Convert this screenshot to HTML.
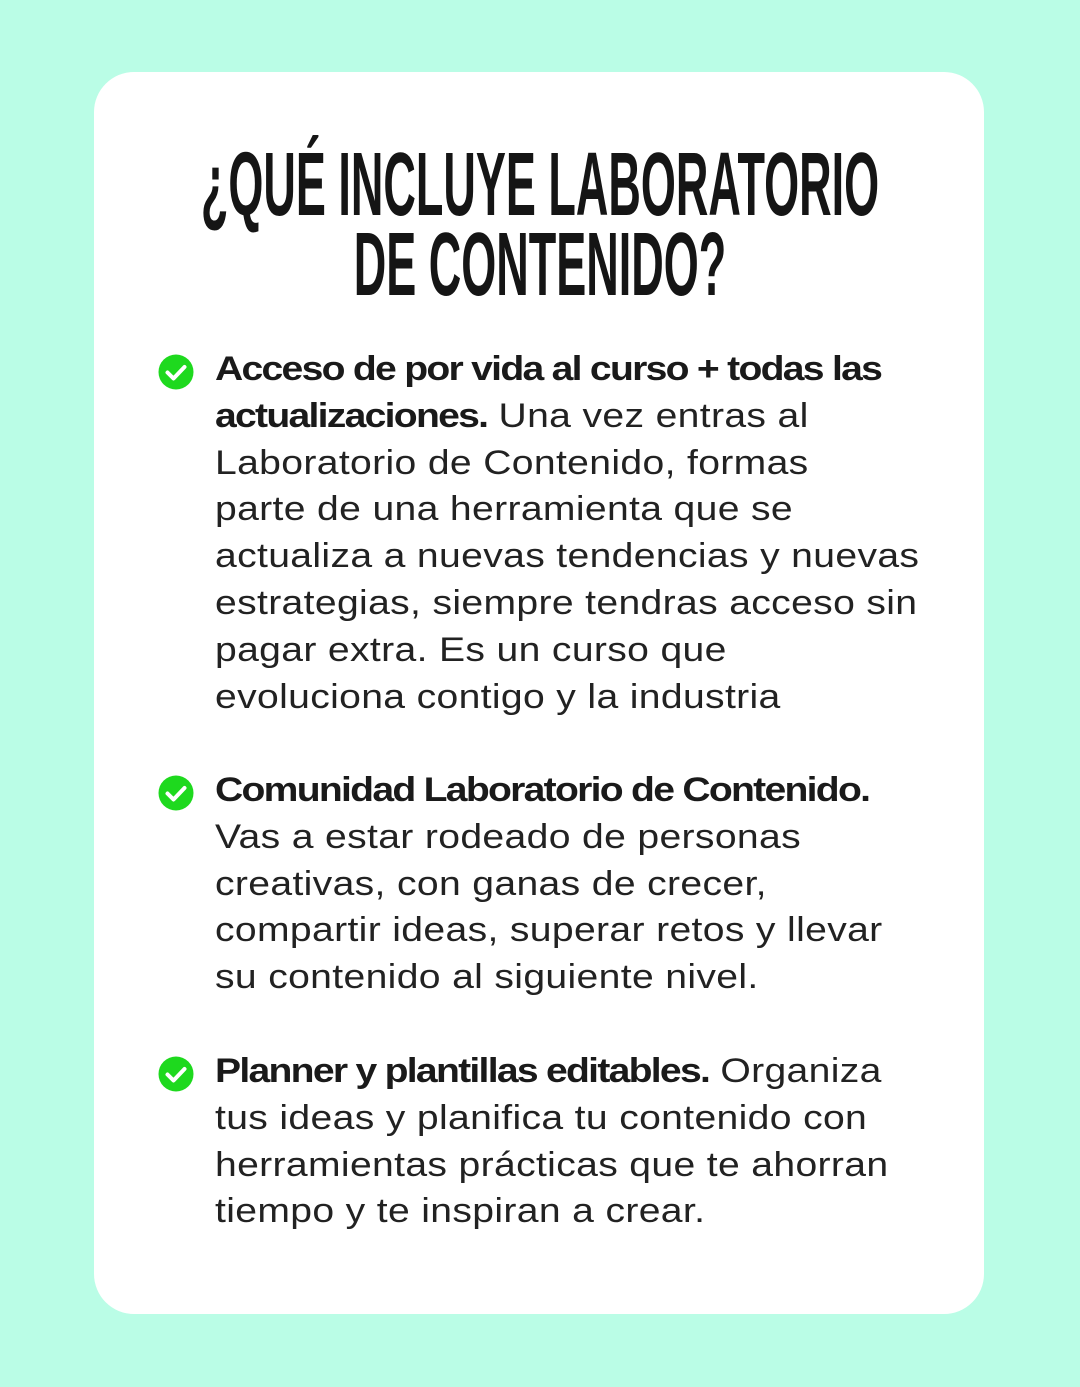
<!DOCTYPE html>
<html><head><meta charset="utf-8"><style>
html,body{margin:0;padding:0;}
body{width:1080px;height:1387px;background:#bafde6;position:relative;overflow:hidden;font-family:"Liberation Sans",sans-serif;color:#1a1a1a;}
.card{position:absolute;left:94px;top:72px;width:890px;height:1242px;background:#fff;border-radius:40px;}
.t{position:absolute;left:540px;font-weight:bold;font-size:90px;line-height:90px;color:#151515;white-space:nowrap;transform:translateX(-50%) scaleX(0.5);}
.item{position:absolute;left:215px;font-size:34px;line-height:46.8px;white-space:nowrap;color:#222;transform:scaleX(1.15);transform-origin:left top;letter-spacing:0.3px;}
.item b{font-weight:bold;letter-spacing:-1.5px;color:#1a1a1a;}
.ck{position:absolute;left:158px;width:36px;height:36px;}
</style></head><body>
<div class="card"></div>
<div class="t" style="top:140px">¿QUÉ INCLUYE LABORATORIO</div>
<div class="t" style="top:220px">DE CONTENIDO?</div>

<svg class="ck" style="top:354px" viewBox="0 0 36 36"><circle cx="18" cy="18" r="17.5" fill="#1ed91e"/><path d="M9.5 18.5l6 6 11-11.5" fill="none" stroke="#fff" stroke-width="4" stroke-linecap="round" stroke-linejoin="round"/></svg>
<div class="item" style="top:346px"><b>Acceso de por vida al curso + todas las</b><br><b>actualizaciones.</b> Una vez entras al<br>Laboratorio de Contenido, formas<br>parte de una herramienta que se<br>actualiza a nuevas tendencias y nuevas<br>estrategias, siempre tendras acceso sin<br>pagar extra. Es un curso que<br>evoluciona contigo y la industria</div>

<svg class="ck" style="top:775px" viewBox="0 0 36 36"><circle cx="18" cy="18" r="17.5" fill="#1ed91e"/><path d="M9.5 18.5l6 6 11-11.5" fill="none" stroke="#fff" stroke-width="4" stroke-linecap="round" stroke-linejoin="round"/></svg>
<div class="item" style="top:767px"><b>Comunidad Laboratorio de Contenido.</b><br>Vas a estar rodeado de personas<br>creativas, con ganas de crecer,<br>compartir ideas, superar retos y llevar<br>su contenido al siguiente nivel.</div>

<svg class="ck" style="top:1056px" viewBox="0 0 36 36"><circle cx="18" cy="18" r="17.5" fill="#1ed91e"/><path d="M9.5 18.5l6 6 11-11.5" fill="none" stroke="#fff" stroke-width="4" stroke-linecap="round" stroke-linejoin="round"/></svg>
<div class="item" style="top:1048px"><b>Planner y plantillas editables.</b> Organiza<br>tus ideas y planifica tu contenido con<br>herramientas prácticas que te ahorran<br>tiempo y te inspiran a crear.</div>
</body></html>
